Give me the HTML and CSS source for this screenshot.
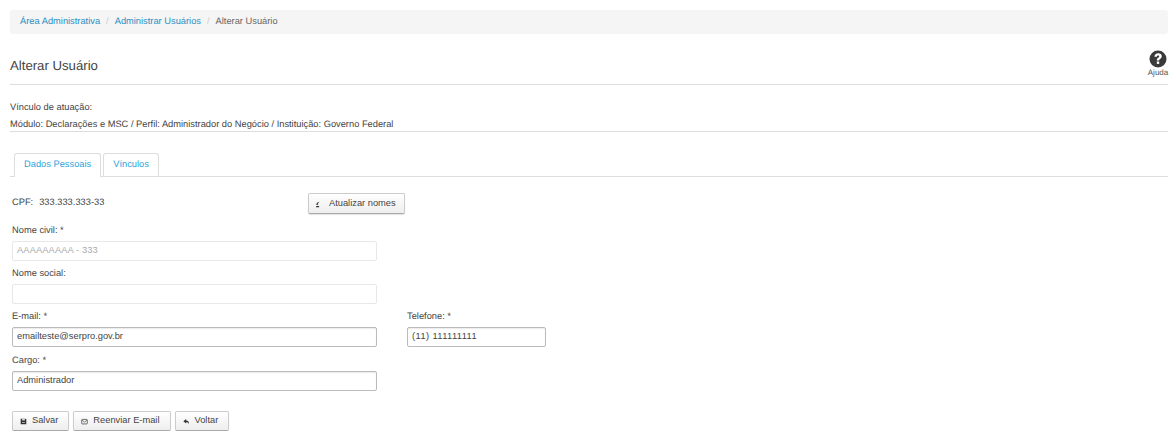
FILE: index.html
```html
<!DOCTYPE html>
<html lang="pt-BR">
<head>
<meta charset="utf-8">
<title>Alterar Usuário</title>
<link rel="stylesheet" href="styles.css">
</head>
<body>
<nav class="breadcrumb">
  <a href="#">Área Administrativa</a><span class="sep">/</span><a href="#">Administrar Usuários</a><span class="sep">/</span><span class="current">Alterar Usuário</span>
</nav>
<header class="page-head">
  <h1>Alterar Usuário</h1>
  <a class="help" href="#">
    <svg class="help-icon" viewBox="0 0 18 18" aria-hidden="true">
      <circle cx="9" cy="9" r="8.5" fill="#3a3a3a"/>
      <path d="M5.4 6.700C5.600 4.500 7.100 3.300 9.200 3.300c2.100 0 3.600 1.200 3.600 3 0 1.300-.7 2-1.600 2.600-.8.500-1 .8-1 1.500H7.800c0-1.400.5-2.100 1.300-2.700.7-.5 1.100-.8 1.100-1.300 0-.6-.4-1-1.100-1-.7 0-1.200.5-1.300 1.300z" fill="#fff"/>
      <rect x="7.800" y="11.500" width="2.400" height="2.400" fill="#fff"/>
    </svg>
    <span>Ajuda</span>
  </a>
</header>
<section class="context">
  <p>Vínculo de atuação:</p>
  <p>Módulo: Declarações e MSC / Perfil: Administrador do Negócio / Instituição: Governo Federal</p>
</section>
<ul class="tabs">
  <li class="tab active"><a href="#">Dados Pessoais</a></li>
  <li class="tab"><a href="#">Vínculos</a></li>
</ul>
<form class="form">
  <div class="cpf-row">
    <div class="cpf"><span>CPF:</span><span>333.333.333-33</span></div>
    <button type="button" class="btn btn-sync">
      <svg class="ico" viewBox="0 0 10 10" aria-hidden="true"><path d="M8 1C5.800 1 4.300 2 4 4H2.500l2 2.200L6.500 4H5.400c.2-1.100 1.200-2 2.600-3zM3.500 7.200h3.800v1.600H2.500z" fill="#333"/></svg>
      Atualizar nomes
    </button>
  </div>
  <div class="field civil">
    <label>Nome civil: *</label>
    <input class="input wide muted" type="text" value="AAAAAAAAA - 333" disabled>
  </div>
  <div class="field social">
    <label>Nome social:</label>
    <input class="input wide muted" type="text" disabled>
  </div>
  <div class="two-col">
    <div class="field">
      <label>E-mail: *</label>
      <input class="input wide" type="text" value="emailteste@serpro.gov.br">
    </div>
    <div class="field">
      <label>Telefone: *</label>
      <input class="input narrow" type="text" value="(11) 111111111">
    </div>
  </div>
  <div class="field cargo">
    <label>Cargo: *</label>
    <input class="input wide" type="text" value="Administrador">
  </div>
  <div class="actions">
    <button type="button" class="btn">
      <svg class="ico" viewBox="0 0 10 10" aria-hidden="true"><path d="M1 1h7l1 1v7H1z" fill="#333"/><rect x="3" y="1" width="4" height="2.500" fill="#ddd"/><rect x="3" y="6" width="4" height="1" fill="#ddd"/></svg>
      Salvar
    </button>
    <button type="button" class="btn">
      <svg class="ico" viewBox="0 0 10 10" aria-hidden="true"><rect x="1" y="2" width="8" height="6.500" rx="1" fill="none" stroke="#333"/><path d="M1.500 3 5 6l3.500-3" fill="none" stroke="#333" stroke-width=".9"/></svg>
      Reenviar E-mail
    </button>
    <button type="button" class="btn">
      <svg class="ico" viewBox="0 0 10 10" aria-hidden="true"><path d="M4.500 1.500 0.500 4.800 4.500 8V5.900c2 0 3.200.6 3.800 2.600.7-3-1-4.800-3.800-5z" fill="#333"/></svg>
      Voltar
    </button>
  </div>
</form>
</body>
</html>
```
FILE: styles.css
```css
* { box-sizing: border-box; }
html, body { margin: 0; padding: 0; }
body {
  padding: 10px 8px 0 10px;
  font-family: "Liberation Sans", Arial, sans-serif;
  font-size: 9.300px;
  line-height: 14px;
  color: #444;
  background: #fff;
  text-rendering: geometricPrecision;
}
a { color: #2a8fc4; text-decoration: none; }

.breadcrumb {
  height: 24px;
  padding: 4px 10px;
  background: #f5f5f5;
  border-radius: 3px;
}
.breadcrumb .sep { padding: 0 6px; color: #ccc; }
.breadcrumb .current { color: #666; }

.page-head {
  display: flex;
  justify-content: space-between;
  height: 51px;
  padding-top: 12px;
  border-bottom: 1px solid #ddd;
}
.page-head h1 {
  margin: 10px 0 0;
  font-size: 13.200px;
  font-weight: 400;
  line-height: 20px;
  color: #444;
}
.help {
  display: flex;
  flex-direction: column;
  align-items: center;
  width: 20px;
  font-size: 8px;
  line-height: 10px;
  color: #555;
}
.help-icon { width: 18px; height: 18px; margin-top: 4px; flex: none; }

.context {
  height: 47px;
  padding-top: 15px;
  border-bottom: 1px solid #ddd;
}
.context p { margin: 0 0 3px; }

.tabs {
  display: flex;
  gap: 2px;
  margin: 21px 0 0;
  padding: 0 0 0 4px;
  list-style: none;
  height: 24px;
  border-bottom: 1px solid #ddd;
}
.tab {
  height: 23px;
  border: 1px solid #ddd;
  border-bottom: 0;
  border-radius: 3px 3px 0 0;
  padding: 3px 9px 0 9px;
}
.tab a { color: #2ea3dc; }
.tab.active { height: 24px; background: #fff; }

.form { padding: 16px 0 0 2px; }
.cpf-row { display: flex; height: 21px; }
.cpf { width: 297px; display: flex; gap: 6px; padding-top: 2px; }

.btn {
  display: inline-flex;
  align-items: center;
  gap: 5px;
  height: 20px;
  padding: 0 10px 2px 7px;
  font: inherit;
  color: #444;
  white-space: nowrap;
  background: linear-gradient(#fff, #eee);
  border: 1px solid #ccc;
  border-bottom-color: #aaa;
  border-radius: 2px;
  box-shadow: 0 1px 1px rgba(0,0,0,.12);
}
.ico { width: 7px; height: 7px; flex: none; margin-top: 3px; }
.btn-sync { width: 97px; height: 21px; gap: 8px; padding-left: 5px; margin-left: -1px; }

.field label { display: block; height: 14px; }
.field { display: flex; flex-direction: column; gap: 4px; }
.civil { margin-top: 9px; }
.social { margin-top: 5px; }
.two-col { display: flex; gap: 30px; margin-top: 5px; }
.cargo { margin-top: 6px; }

.input {
  height: 20px;
  padding: 0 4px 2px;
  font: inherit;
  color: #444;
  background: #fff;
  border: 1px solid #bbb;
  border-radius: 2px;
  box-shadow: inset 0 1px 1px rgba(0,0,0,.08);
  outline: 0;
}
.input.muted { border-color: #e8e8e8; box-shadow: none; color: #aaa; letter-spacing: .12px; }
.wide { width: 365px; }
.narrow { width: 139px; letter-spacing: .4px; }

.actions { display: flex; gap: 4px; margin-top: 20px; }
```
